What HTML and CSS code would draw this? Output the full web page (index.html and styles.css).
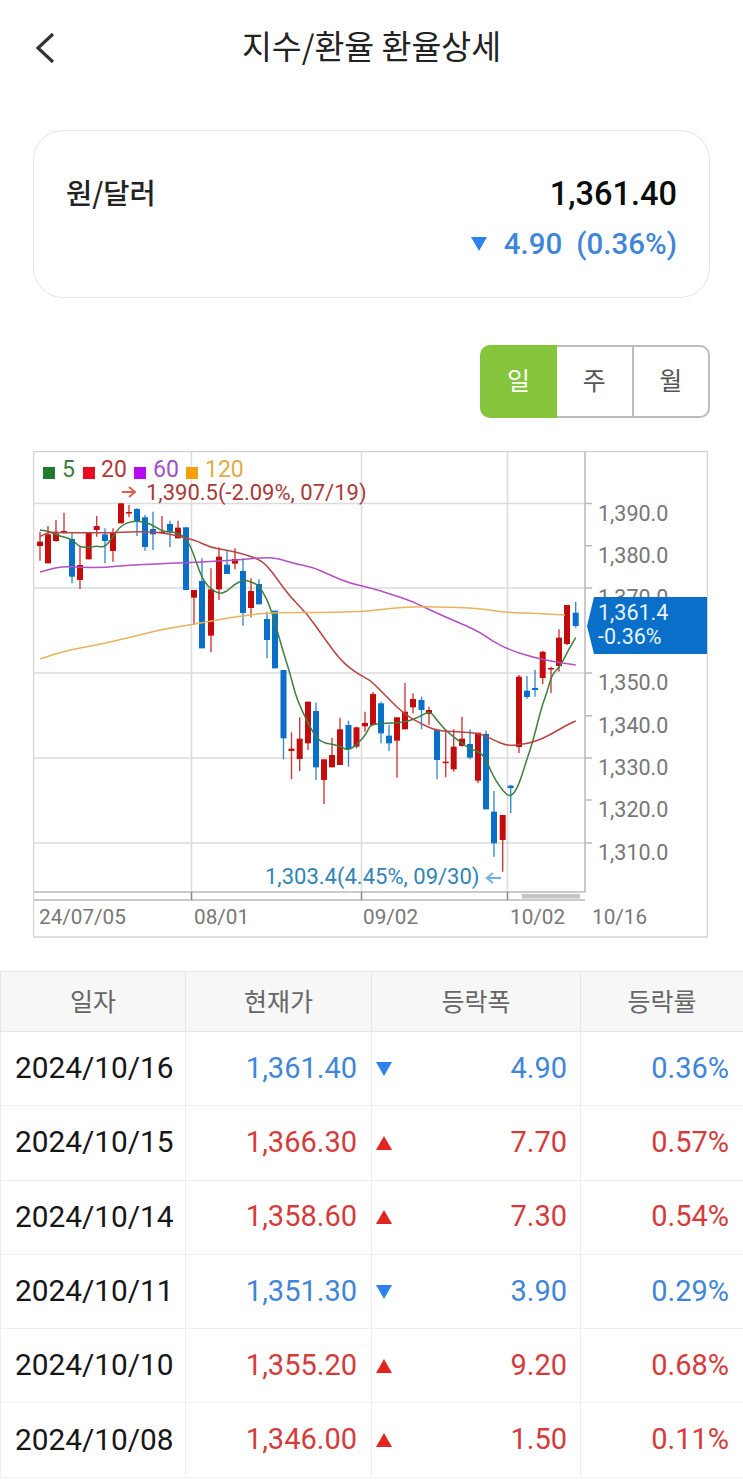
FILE: index.html
```html
<!DOCTYPE html>
<html>
<head>
	<title>지수/환율 환율상세</title>
	<meta charset="utf-8">
	<link rel="stylesheet" href="styles.css">
</head>
<body>
	<header class="top-bar">
		<svg class="back-icon" width="24" height="34" viewBox="0 0 24 34"><path d="M20 3L5 17L20 31" fill="none" stroke="#333" stroke-width="3.2"/></svg>
		<h1>지수/환율 환율상세</h1>
	</header>

	<section class="rate-card">
		<div class="rate-name">원/달러</div>
		<div class="rate-values">
			<div class="rate-price">1,361.40</div>
			<div class="rate-change"><span class="tri-down"></span><span>4.90</span><span>(0.36%)</span></div>
		</div>
	</section>

	<div class="period-tabs">
		<div class="tab tab-active">일</div>
		<div class="tab">주</div>
		<div class="tab">월</div>
	</div>

	<svg class="chart" id="chart" width="675" height="487" viewBox="33 451 675 487">
		<rect x="33.5" y="451.5" width="674" height="485.5" fill="#fff" stroke="#d4d4d4" stroke-width="1.5"/>
		<g stroke="#dcdcdc" stroke-width="1.5">
			<path d="M34 503.5H585M34 588H585M34 673H585M34 758H585M34 843H585" fill="none"/>
			<path d="M191.5 452V892M361.5 452V892M507.5 452V892" fill="none"/>
		</g>
		<g stroke="#b9b9b9" stroke-width="1.5" fill="none">
			<path d="M585 452V892M34 892H585M34 900H585"/>
			<path d="M585 503.5H592M585 545.7H592M585 588H592M585 673H592M585 715.7H592M585 758H592M585 800H592M585 843H592"/>
			<path d="M191.5 892V900M361.5 892V900M507.5 892V900" stroke="#888"/>
		</g>
		<rect x="522" y="894" width="58" height="4.5" fill="#c4c4c4"/>
		<g id="plot"></g>

		<g class="legend">
			<rect x="43" y="467" width="12" height="12" fill="#1f7a2e"/><text x="62" y="477" fill="#3f7a45">5</text>
			<rect x="83" y="467" width="12" height="12" fill="#ea0a1f"/><text x="101" y="477" fill="#b23a3a">20</text>
			<rect x="134" y="467" width="12" height="12" fill="#b60bf0"/><text x="153" y="477" fill="#a14fc9">60</text>
			<rect x="186" y="467" width="12" height="12" fill="#f5a00a"/><text x="205" y="477" fill="#e0ab4a">120</text>
		</g>
		<path d="M122 492H134M129 487L135 492L129 497" fill="none" stroke="#e0604f" stroke-width="2"/>
		<text class="label" x="146" y="500" fill="#a83a3a">1,390.5(-2.09%, 07/19)</text>
		<text class="label" x="265" y="884" fill="#2f84b8">1,303.4(4.45%, 09/30)</text>
		<path d="M501 878H488M493 873L487 878L493 883" fill="none" stroke="#6fb0ea" stroke-width="2"/>

		<g class="axis-text">
			<text x="598" y="521">1,390.0</text>
			<text x="598" y="563">1,380.0</text>
			<text x="598" y="605">1,370.0</text>
			<text x="598" y="690">1,350.0</text>
			<text x="598" y="733">1,340.0</text>
			<text x="598" y="775">1,330.0</text>
			<text x="598" y="817">1,320.0</text>
			<text x="598" y="860">1,310.0</text>
		</g>
		<g class="date-text">
			<text x="39" y="924">24/07/05</text>
			<text x="194" y="924">08/01</text>
			<text x="363" y="924">09/02</text>
			<text x="510" y="924">10/02</text>
			<text x="592" y="924">10/16</text>
		</g>

		<path d="M707 597H594L587 626L594 654H707Z" fill="#0a6fc9"/>
		<text class="tag-text" x="598" y="620">1,361.4</text>
		<text class="tag-text" x="598" y="644">-0.36%</text>
	</svg>

	<table class="rate-table">
		<colgroup>
			<col class="col-date"><col class="col-price"><col class="col-diff"><col class="col-rate">
		</colgroup>
		<thead>
			<tr><th>일자</th><th>현재가</th><th>등락폭</th><th>등락률</th></tr>
		</thead>
		<tbody>
			<tr class="down"><td>2024/10/16</td><td>1,361.40</td><td><span class="tri-down"></span><span>4.90</span></td><td>0.36%</td></tr>
			<tr class="up"><td>2024/10/15</td><td>1,366.30</td><td><span class="tri-up"></span><span>7.70</span></td><td>0.57%</td></tr>
			<tr class="up"><td>2024/10/14</td><td>1,358.60</td><td><span class="tri-up"></span><span>7.30</span></td><td>0.54%</td></tr>
			<tr class="down"><td>2024/10/11</td><td>1,351.30</td><td><span class="tri-down"></span><span>3.90</span></td><td>0.29%</td></tr>
			<tr class="up"><td>2024/10/10</td><td>1,355.20</td><td><span class="tri-up"></span><span>9.20</span></td><td>0.68%</td></tr>
			<tr class="up"><td>2024/10/08</td><td>1,346.00</td><td><span class="tri-up"></span><span>1.50</span></td><td>0.11%</td></tr>
		</tbody>
	</table>

	<script src="chart.js"></script>
</body>
</html>
```

FILE: styles.css
```css
body {
	margin: 0;
	background-color: #fff;
	font-family: Roboto, "Noto Sans CJK KR", sans-serif;
	color: #111;
}

.top-bar {
	height: 92px;
	display: grid;
	grid-template-columns: 1fr auto 1fr;
	align-items: center;
}
.top-bar h1 {
	margin: 0 0 4px 0;
	font-family: "Noto Sans CJK KR", sans-serif;
	font-size: 32.5px;
	font-weight: 400;
	color: #222;
}
.back-icon {
	margin: 4px 0 0 33px;
}

.rate-card {
	margin: 38px 33px 0 33px;
	height: 168px;
	box-sizing: border-box;
	border: 1.5px solid #e4e4e4;
	border-radius: 30px;
	padding: 40px 32px 0 32px;
	display: flex;
	justify-content: space-between;
}
.rate-name {
	font-family: "Noto Sans CJK KR", sans-serif;
	font-size: 28.5px;
	font-weight: 500;
	line-height: 42px;
	color: #222;
}
.rate-values {
	text-align: right;
}
.rate-price {
	font-size: 32.5px;
	font-weight: 500;
	line-height: 46px;
	color: #0c0c0c;
}
.rate-change {
	margin-top: 7px;
	display: flex;
	align-items: center;
	justify-content: flex-end;
	gap: 14px;
	font-size: 29.5px;
	font-weight: 500;
	line-height: 40px;
	color: #3f86d8;
}
.rate-change .tri-down {
	margin-right: 3px;
}

.tri-down, .tri-up {
	display: inline-block;
	width: 0;
	height: 0;
	border-left: 8px solid transparent;
	border-right: 8px solid transparent;
}
.tri-down {
	border-top: 14px solid #2d82ee;
}
.tri-up {
	border-bottom: 14px solid #e0241f;
}

.period-tabs {
	margin: 47px 33px 0 auto;
	width: 230px;
	height: 73px;
	display: flex;
	font-family: "Noto Sans CJK KR", sans-serif;
	font-size: 25px;
	color: #555;
}
.tab {
	flex: 1;
	box-sizing: border-box;
	display: flex;
	align-items: center;
	justify-content: center;
	padding-bottom: 6px;
	border-top: 2px solid #bcbcbc;
	border-bottom: 2px solid #bcbcbc;
}
.tab:last-child {
	border-left: 2px solid #bcbcbc;
	border-right: 2px solid #bcbcbc;
	border-radius: 0 10px 10px 0;
}
.tab-active {
	flex: none;
	width: 77px;
	border: none;
	border-radius: 10px 0 0 10px;
	background-color: #85c53c;
	color: #fff;
}

.chart {
	display: block;
	margin: 33px 0 0 33px;
}
.legend text {
	font-size: 23px;
}
.label {
	font-size: 22px;
}
.axis-text text {
	font-size: 21.5px;
	fill: #777;
}
.date-text text {
	font-size: 20.7px;
	fill: #777;
}
.tag-text {
	font-size: 21.5px;
	fill: #e8f3fc;
}

.rate-table {
	margin-top: 33px;
	width: 743px;
	table-layout: fixed;
	border-collapse: collapse;
	border-top: 1.5px solid #e6e6e6;
}
.col-date { width: 185px; }
.col-price { width: 186px; }
.col-diff { width: 209px; }
.col-rate { width: 163px; }

th, td {
	border: 1.5px solid #eeeeee;
	padding: 0;
}
th {
	height: 55px;
	background-color: #f7f7f7;
	border-color: #e6e6e6;
	font-family: "Noto Sans CJK KR", sans-serif;
	font-size: 25px;
	font-weight: 400;
	color: #666;
	padding-bottom: 4px;
}
td {
	height: 71.3px;
	font-size: 29px;
	text-align: right;
	padding-right: 14px;
	padding-bottom: 2px;
}
td:first-child {
	text-align: left;
	padding-left: 14px;
	padding-right: 0;
	font-size: 29.8px;
	color: #161616;
}
td:nth-child(3) {
	padding-left: 4px;
	padding-right: 13px;
}
td:nth-child(3) > span:last-child {
	float: right;
}
td:nth-child(3) > span:first-child {
	float: left;
	margin-top: 11px;
}
.down td:not(:first-child) { color: #3f86d8; }
.up td:not(:first-child) { color: #d43c3c; }
```

FILE: chart.js
```js
// Candles: x, up?, wick top, body top, body bottom, wick bottom (page pixels)
const RED = "#c40c0c";
const BLUE = "#0a6fc9";

// Values were read off 3x crops, one for the upper half and one for the lower
function hi(v) { return 450 + v / 3; }
function lo(v) { return 690 + v / 3; }

const candles = [
	[40, 1, hi(245), hi(275), hi(288), hi(332)],
	[48, 1, hi(228), hi(253), hi(340), hi(340)],
	[56, 1, hi(210), hi(250), hi(273), hi(275)],
	[64, 1, hi(188), hi(243), hi(246), hi(246)],
	[72, 0, hi(250), hi(267), hi(380), hi(400)],
	[80, 1, hi(290), hi(345), hi(390), hi(417)],
	[88.7, 1, hi(248), hi(248), hi(328), hi(328)],
	[96.7, 1, hi(198), hi(228), hi(240), hi(260)],
	[105, 0, hi(235), hi(253), hi(273), hi(340)],
	[113, 1, hi(235), hi(248), hi(303), hi(335)],
	[121, 1, hi(160), hi(160), hi(220), hi(220)],
	[129, 1, hi(165), hi(186), hi(189), hi(202)],
	[137, 0, hi(175), hi(177), hi(213), hi(258)],
	[145, 0, hi(195), hi(202), hi(291), hi(302)],
	[153, 0, hi(185), hi(237), hi(253), hi(300)],
	[162, 1, hi(198), hi(245), hi(248), hi(250)],
	[170, 0, hi(212), hi(222), hi(245), hi(292)],
	[178, 1, hi(212), hi(233), hi(265), hi(265)],
	[186, 0, hi(232), hi(232), hi(420), hi(420)],
	[194, 1, hi(420), hi(420), hi(443), hi(525)],
	[202, 0, hi(325), hi(393), hi(595), hi(595)],
	[211, 1, hi(355), hi(418), hi(557), hi(607)],
	[219, 1, hi(292), hi(320), hi(418), hi(450)],
	[227, 0, hi(300), hi(344), hi(372), hi(372)],
	[235, 1, hi(295), hi(327), hi(341), hi(358)],
	[243, 0, hi(325), hi(363), hi(489), hi(527)],
	[251, 1, hi(385), hi(423), hi(474), hi(502)],
	[259, 0, hi(388), hi(402), hi(463), hi(463)],
	[267, 0, hi(485), hi(507), hi(570), hi(625)],
	[275, 0, hi(482), hi(482), hi(655), hi(655)],
	[283.5, 0, 670, 670, lo(145), lo(208)],
	[291.5, 1, lo(127), lo(176), lo(183), lo(268)],
	[299.7, 1, lo(82), lo(146), lo(207), lo(243)],
	[308, 1, lo(35), lo(35), lo(160), lo(180)],
	[316, 0, lo(38), lo(63), lo(232), lo(270)],
	[324, 1, lo(208), lo(208), lo(270), lo(342)],
	[332, 1, lo(143), lo(195), lo(232), lo(232)],
	[340, 1, lo(83), lo(118), lo(225), lo(225)],
	[348.5, 0, lo(92), lo(105), lo(178), lo(230)],
	[356.5, 1, lo(110), lo(112), lo(170), lo(175)],
	[365, 1, lo(65), lo(99), lo(109), lo(125)],
	[373, 1, 692, 694, lo(105), lo(105)],
	[381, 0, lo(35), lo(40), lo(130), lo(160)],
	[389, 0, lo(105), lo(137), lo(160), lo(183)],
	[397, 1, lo(82), lo(82), lo(152), lo(263)],
	[405, 1, 683, lo(65), lo(118), lo(118)],
	[413, 1, lo(10), lo(27), lo(52), lo(70)],
	[421.5, 0, lo(20), lo(30), lo(60), lo(118)],
	[429, 1, lo(50), lo(60), lo(72), lo(105)],
	[437, 0, lo(120), lo(120), lo(210), lo(268)],
	[445.7, 1, lo(120), lo(215), lo(219), lo(262)],
	[453.7, 1, lo(118), lo(170), lo(238), lo(245)],
	[462, 1, lo(80), lo(146), lo(168), lo(170)],
	[470, 0, lo(118), lo(162), lo(203), lo(208)],
	[478, 1, lo(128), lo(128), lo(272), lo(280)],
	[486, 0, lo(122), lo(132), lo(358), lo(358)],
	[494, 0, lo(303), lo(365), lo(460), lo(500)],
	[502.7, 1, lo(375), lo(375), lo(450), lo(545)],
	[510.7, 0, lo(285), lo(287), lo(294), lo(370)],
	[519, 1, 675, 676.7, 747, 753],
	[527, 0, 676, 690.7, 697, 699],
	[535, 0, 670, 688, 690, 696.7],
	[542.7, 1, 651, 651.7, 678, 684],
	[551, 1, 666.7, 668, 669.5, 693],
	[559, 1, hi(538), hi(563), hi(648), hi(665)],
	[567, 1, hi(465), hi(465), hi(582), hi(585)],
	[575.7, 0, hi(455), hi(488), hi(528), hi(533)]
];

function pts(list, x0, y0) {
	return list.map(function(p) {
		return [x0 + p[0] / 3, y0 + p[1] / 3];
	});
}

const lines = [
	{ color: "#3d7f3d", points: [].concat(
		pts([[30,240],[55,243],[80,255],[105,262],[125,268],[150,292],[175,292],[200,288],[225,292],[245,265],[265,235],[290,218],[320,213],[350,217],[375,230],[400,245],[420,245],[445,250],[470,265],[490,310],[510,370],[530,405],[545,418],[568,432],[590,425],[615,402],[640,390],[660,395],[685,405],[710,445],[730,500],[755,590],[780,670]], 30, 450),
		pts([[795,10],[815,60],[840,110],[860,145],[885,160],[910,162],[935,172],[955,180],[980,165],[1010,130]], 30, 690),
		pts([[0,105],[30,100],[70,100],[110,95],[150,80],[180,62],[200,90],[230,125],[270,155],[300,178],[340,190],[370,260],[400,305],[422,322],[445,290],[470,210],[490,150],[515,50],[530,10]], 370, 690),
		pts([[545,675],[570,650],[595,600],[617,563]], 370, 450)
	) },
	{ color: "#b84444", points: [].concat(
		pts([[30,260],[50,245],[100,248],[150,248],[200,248],[250,248],[300,245],[350,245],[400,248],[460,262],[500,272],[540,292],[590,300],[640,312],[680,325],[710,345],[740,385],[780,440],[830,490],[880,560],[930,630],[980,670],[1020,690]], 30, 450),
		pts([[30,0],[60,30],[100,70],[150,100],[200,122],[260,125],[330,130],[370,150],[410,167],[440,165],[490,157],[540,135],[590,105],[617,93]], 370, 690)
	) },
	{ color: "#b44fc4", points: [].concat(
		pts([[30,366],[60,358],[100,349],[150,352],[220,353],[300,345],[380,342],[460,338],[540,335],[620,330],[700,322],[740,325],[800,342],[850,352],[900,375],[960,400],[1020,413]], 30, 450),
		pts([[60,432],[130,455],[200,490],[320,540],[370,575],[420,600],[490,622],[550,635],[617,645]], 370, 450)
	) },
	{ color: "#e8b35a", points: [].concat(
		pts([[30,627],[100,603],[200,585],[300,562],[400,537],[480,525],[560,510],[640,497],[700,490],[800,487],[900,488],[1020,483]], 30, 450),
		pts([[60,475],[130,470],[200,470],[330,475],[410,488],[500,490],[585,495]], 370, 450)
	) }
];

const plot = document.getElementById("plot");

function add(name, attrs) {
	let el = document.createElementNS("http://www.w3.org/2000/svg", name);
	for (let key in attrs) {
		el.setAttribute(key, attrs[key]);
	}
	plot.appendChild(el);
}

// Rounds the corners: curve through the midpoints, points act as controls
function smooth(p) {
	let d = "M" + p[0][0].toFixed(1) + " " + p[0][1].toFixed(1);
	for (let i = 1; i < p.length - 1; i++) {
		let mx = (p[i][0] + p[i + 1][0]) / 2;
		let my = (p[i][1] + p[i + 1][1]) / 2;
		d += "Q" + p[i][0].toFixed(1) + " " + p[i][1].toFixed(1) + " " + mx.toFixed(1) + " " + my.toFixed(1);
	}
	let last = p[p.length - 1];
	return d + "L" + last[0].toFixed(1) + " " + last[1].toFixed(1);
}

// Candles first, the moving averages are drawn over them
candles.forEach(function(c) {
	let color = c[1] ? RED : BLUE;
	add("line", { x1: c[0], x2: c[0], y1: c[2], y2: c[5], stroke: color, "stroke-width": 1.4, opacity: 0.8 });
	add("rect", { x: c[0] - 3, y: c[3], width: 6, height: Math.max(c[4] - c[3], 1.5), fill: color });
});

lines.forEach(function(line) {
	add("path", { d: smooth(line.points), fill: "none", stroke: line.color, "stroke-width": 1.5 });
});
```
